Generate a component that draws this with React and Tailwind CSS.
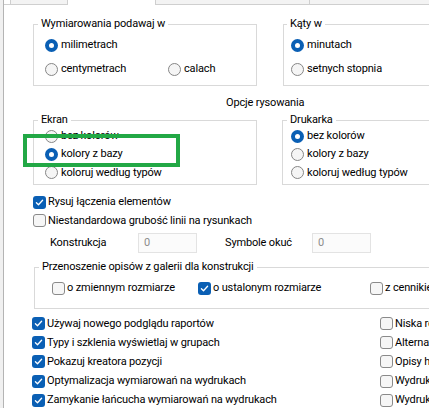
import React from "react";

function Radio({ checked, children, className = "" }) {
  return (
    <div className={"flex items-center whitespace-nowrap " + className}>
      {checked ? (
        <span className="w-[13px] h-[13px] rounded-full bg-[#0a5fb4] flex items-center justify-center shrink-0">
          <span className="w-[5px] h-[5px] rounded-full bg-white" />
        </span>
      ) : (
        <span className="w-[13px] h-[13px] rounded-full border border-[#868686] bg-[#f5f5f5] shrink-0" />
      )}
      <span className="ml-[3px]">{children}</span>
    </div>
  );
}

function Check({ checked, children, className = "" }) {
  return (
    <div className={"flex items-center whitespace-nowrap " + className}>
      {checked ? (
        <span className="w-[13px] h-[13px] rounded-[3px] bg-[#0a5fb4] flex items-center justify-center shrink-0">
          <svg width="9" height="9" viewBox="0 0 9 9" fill="none">
            <path d="M1.4 4.7 L3.5 6.7 L7.6 2.3" stroke="white" strokeWidth="1.3" strokeLinecap="round" strokeLinejoin="round" />
          </svg>
        </span>
      ) : (
        <span className="w-[13px] h-[13px] rounded-[3px] border border-[#8a8a8a] bg-[#f6f6f6] shrink-0" />
      )}
      <span className="ml-[2px]">{children}</span>
    </div>
  );
}

function NumberField({ value }) {
  return (
    <div className="w-[59px] h-[20px] border border-[#e3e3e3] bg-[#fbfbfb] text-[#8c8c8c] pl-[5px] flex items-center">
      {value}
    </div>
  );
}

export default function App() {
  return (
    <div className="relative flex w-[429px] h-[408px] overflow-hidden bg-[#f0f0f0] font-[Roboto,sans-serif] text-[11px] tracking-[-0.15px] leading-[16px] text-black">
      <div className="w-[3px] shrink-0" />
      <div className="w-[520px] shrink-0 border-l border-[#b4b4b4] bg-white">
        {/* tab strip, mostly scrolled out of view */}
        <div className="flex h-[5px]">
          <div className="w-[6px] border-b border-[#cfcfcf]" />
          <div className="w-[58px] bg-[#f3f3f3] border-x border-b border-[#cfcfcf] overflow-hidden">
            <span className="block -mt-[12px] ml-[42px] leading-[14px]">g</span>
          </div>
          <div className="w-[87px]" />
          <div className="w-[155px] bg-[#f3f3f3] border-x border-b border-[#cfcfcf]" />
          <div className="w-[200px] bg-[#f3f3f3] border-b border-[#cfcfcf] overflow-hidden flex">
            <span className="block -mt-[12px] ml-[17px] leading-[14px]">y</span>
            <span className="block -mt-[12px] ml-[79px] leading-[14px]">g</span>
          </div>
        </div>

        {/* units */}
        <div className="flex mt-[11px]">
          <fieldset className="ml-[29px] w-[224px] h-[70px] min-w-0 border border-[#d9d9d9] p-0 m-0">
            <legend className="ml-[4px] px-[3px] leading-[16px]">Wymiarowania podawaj w</legend>
            <div className="pl-[11px] pt-[4px]">
              <Radio checked className="h-[18px]">milimetrach</Radio>
              <div className="flex mt-[6px] h-[18px]">
                <Radio className="w-[123px]">centymetrach</Radio>
                <Radio>calach</Radio>
              </div>
            </div>
          </fieldset>
          <fieldset className="ml-[26px] w-[220px] h-[70px] min-w-0 border border-[#d9d9d9] p-0 m-0">
            <legend className="ml-[3px] px-[3px] leading-[16px]">Kąty w</legend>
            <div className="pl-[7px] pt-[4px]">
              <Radio checked className="h-[18px]">minutach</Radio>
              <Radio className="h-[18px] mt-[6px]">setnych stopnia</Radio>
            </div>
          </fieldset>
        </div>

        <div className="mt-[9px] ml-[222px] h-[16px]">Opcje rysowania</div>

        {/* colour modes */}
        <div className="flex mt-[1px]">
          <fieldset className="ml-[29px] w-[224px] h-[73px] min-w-0 border border-[#d9d9d9] p-0 m-0">
            <legend className="ml-[4px] px-[3px] leading-[16px]">Ekran</legend>
            <div className="pl-[11px] -mt-[1px]">
              <Radio className="h-[18.3px]">bez kolorów</Radio>
              <Radio checked className="h-[18.3px]">kolory z bazy</Radio>
              <Radio className="h-[18.3px]">koloruj według typów</Radio>
            </div>
          </fieldset>
          <fieldset className="ml-[25px] w-[220px] h-[73px] min-w-0 border border-[#d9d9d9] p-0 m-0">
            <legend className="ml-[4px] px-[3px] leading-[16px]">Drukarka</legend>
            <div className="pl-[8px] -mt-[1px]">
              <Radio checked className="h-[18.3px]">bez kolorów</Radio>
              <Radio className="h-[18.3px]">kolory z bazy</Radio>
              <Radio className="h-[18.3px]">koloruj według typów</Radio>
            </div>
          </fieldset>
        </div>

        {/* line options */}
        <div className="mt-[8px] pl-[29px]">
          <Check checked className="h-[18.5px]">Rysuj łączenia elementów</Check>
          <Check className="h-[18.5px]">Niestandardowa grubość linii na rysunkach</Check>
        </div>
        <div className="mt-[3px] h-[20px] flex items-center pl-[46px]">
          <span className="w-[88px]">Konstrukcja</span>
          <NumberField value="0" />
          <span className="ml-[28px] w-[87px]">Symbole okuć</span>
          <NumberField value="0" />
        </div>

        {/* gallery descriptions */}
        <fieldset className="mt-[6px] ml-[30px] w-[480px] h-[50px] min-w-0 border border-[#d9d9d9] p-0">
          <legend className="ml-[4px] px-[3px] leading-[16px]">Przenoszenie opisów z galerii dla konstrukcji</legend>
          <div className="flex mt-[4px] h-[18px] pl-[17px]">
            <Check className="w-[146px]">o zmiennym rozmiarze</Check>
            <Check checked className="w-[172px]">o ustalonym rozmiarze</Check>
            <Check>z cennikiem</Check>
          </div>
        </fieldset>

        {/* general options */}
        <div className="flex mt-[5px]">
          <div className="pl-[28px] w-[376px]">
            <Check checked className="h-[19.2px]">Używaj nowego podglądu raportów</Check>
            <Check checked className="h-[19.2px]">Typy i szklenia wyświetlaj w grupach</Check>
            <Check checked className="h-[19.2px]">Pokazuj kreatora pozycji</Check>
            <Check checked className="h-[19.2px]">Optymalizacja wymiarowań na wydrukach</Check>
            <Check checked className="h-[19.2px]">Zamykanie łańcucha wymiarowań na wydrukach</Check>
          </div>
          <div>
            <Check className="h-[19.2px]">Niska rozdzielczość</Check>
            <Check className="h-[19.2px]">Alternatywne opisy</Check>
            <Check className="h-[19.2px]">Opisy hurtowe</Check>
            <Check className="h-[19.2px]">Wydruki kolorowe</Check>
            <Check className="h-[19.2px]">Wydruki zbiorcze</Check>
          </div>
        </div>
      </div>

      {/* highlight frame */}
      <div className="absolute left-[23px] top-[134px] w-[157px] h-[33px] border-[4px] border-[#22a845]" />
    </div>
  );
}
